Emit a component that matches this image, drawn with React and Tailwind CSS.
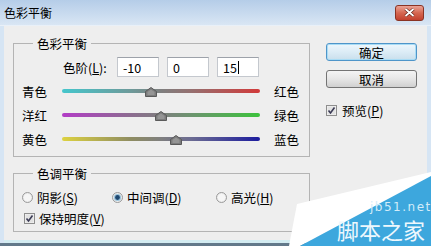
import React from "react";

const sliders = [
  {
    left: "青色",
    right: "红色",
    value: -10,
    track: "bg-[linear-gradient(to_right,#45c6cc,#6e9a9a_35%,#7f7f7f_50%,#957070_65%,#d23a3a)]",
  },
  {
    left: "洋红",
    right: "绿色",
    value: 0,
    track: "bg-[linear-gradient(to_right,#b23cc6,#8c6c90_35%,#7f7f7f_50%,#6c946e_65%,#3cc23c)]",
  },
  {
    left: "黄色",
    right: "蓝色",
    value: 15,
    track: "bg-[linear-gradient(to_right,#ddd240,#8e8c62_35%,#7f7f7f_50%,#6c6c92_65%,#1c1c9e)]",
  },
];

// slider thumb (little grey "house")
const Thumb = ({ value }) => (
  <svg
    className="absolute top-[-2px]"
    style={{ left: ((value + 100) / 200) * 198 - 6 }}
    width="12"
    height="10"
    viewBox="0 0 12 10"
  >
    <polygon points="6,0.5 11.5,4.5 11.5,9.5 0.5,9.5 0.5,4.5" fill="#7c7c7c" stroke="#5a5a5a" />
    <polygon points="6,2.5 9.5,5 9.5,8 2.5,8 2.5,5" fill="#959595" />
  </svg>
);

const Radio = ({ checked }) => (
  <svg width="11" height="11" viewBox="0 0 11 11">
    <circle cx="5.5" cy="5.5" r="5" fill="#ececec" stroke="#9a9a9a" />
    <circle cx="5.5" cy="5.5" r="3.6" fill={checked ? "#9cc4dc" : "#f6f6f6"} />
    {checked && <circle cx="5.5" cy="5.5" r="2.4" fill="#1f4870" />}
  </svg>
);

const Check = () => (
  <svg width="11" height="11" viewBox="0 0 11 11">
    <rect x="0.5" y="0.5" width="10" height="10" fill="#f4f4f4" stroke="#8e8e8e" />
    <rect x="1.5" y="1.5" width="8" height="8" fill="#e2e2e2" />
    <path d="M2.5 5.5 L4.5 8 L8.5 2.5" fill="none" stroke="#3c3c56" strokeWidth="1.6" />
  </svg>
);

const Field = ({ children, last }) => (
  <div className="relative w-[42px] h-[20px] bg-white border border-[#c4c8ce] border-t-[#9da2aa] flex items-center pl-[5px]">
    {children}
    {last && <span className="w-px h-[13px] bg-black ml-px" />}
  </div>
);

export default function App() {
  return (
    <div className="relative w-[431px] h-[246px] overflow-hidden bg-[#d6e5f4] text-black text-[12.5px] leading-[17px] font-['Noto_Sans_CJK_SC','Noto_Sans',sans-serif]">
      {/* title bar */}
      <div className="h-[25px] flex items-center justify-between pl-[4px] pr-[7px] bg-gradient-to-b from-[#b5cde8] to-[#d9e6f4]">
        <span className="text-[12px]">色彩平衡</span>
        <div className="w-[29px] h-[16px] rounded-[3px] border border-[#8a3324] bg-gradient-to-b from-[#eaa396] via-[#d56650] to-[#c2402e] flex items-center justify-center">
          <svg width="11" height="9" viewBox="0 0 11 9">
            <path d="M1.5 1 L9.5 8 M9.5 1 L1.5 8" stroke="#5a1a10" strokeWidth="3" />
            <path d="M1.5 1 L9.5 8 M9.5 1 L1.5 8" stroke="#ffffff" strokeWidth="1.8" />
          </svg>
        </div>
      </div>
      <div className="h-px bg-[#e9f0f8]" />

      {/* client area */}
      <div className="mx-[4px] h-[214px] bg-[#eeeeee] flex pl-[9px] pt-[9px]">
        <div className="flex flex-col w-[297px]">
          <fieldset className="h-[122px] border border-[#b4b4b4]">
            <legend className="ml-[19px] px-[4px]">色彩平衡</legend>
            <div className="mt-[5px] h-[20px] flex items-center pl-[49px] gap-[8px]">
              <span className="w-[46px]">
                色阶(<u>L</u>):
              </span>
              <Field>-10</Field>
              <Field>0</Field>
              <Field last>15</Field>
            </div>
            <div className="mt-[2px]">
              {sliders.map((s) => (
                <div key={s.left} className="h-[24px] flex items-center pl-[8px]">
                  <span className="w-[40px]">{s.left}</span>
                  <div className={`relative w-[198px] h-[4px] rounded-full ${s.track}`}>
                    <Thumb value={s.value} />
                  </div>
                  <span className="ml-[14px]">{s.right}</span>
                </div>
              ))}
            </div>
          </fieldset>

          <fieldset className="mt-[8px] h-[67px] border border-[#b4b4b4]">
            <legend className="ml-[19px] px-[4px]">色调平衡</legend>
            <div className="mt-[5px] h-[20px] flex items-center pl-[8px]">
              <div className="w-[90px] flex items-center gap-[4px]">
                <Radio />
                <span>
                  阴影(<u>S</u>)
                </span>
              </div>
              <div className="w-[104px] flex items-center gap-[4px]">
                <Radio checked />
                <span>
                  中间调(<u>D</u>)
                </span>
              </div>
              <div className="flex items-center gap-[4px]">
                <Radio />
                <span>
                  高光(<u>H</u>)
                </span>
              </div>
            </div>
            <div className="mt-px h-[20px] flex items-center pl-[10px] gap-[4px]">
              <Check />
              <span>
                保持明度(<u>V</u>)
              </span>
            </div>
          </fieldset>
        </div>

        {/* buttons */}
        <div className="ml-[16px] flex flex-col">
          <button className="mt-[8px] w-[91px] h-[18px] rounded-[3px] border border-[#4f95c9] bg-gradient-to-b from-[#eef7fc] via-[#dcecf6] to-[#c9dfec] shadow-[inset_0_0_0_1px_#a9dcf5] flex items-center justify-center">
            确定
          </button>
          <button className="mt-[9px] w-[91px] h-[18px] rounded-[3px] border border-[#747474] bg-gradient-to-b from-[#f4f4f4] via-[#e6e6e6] to-[#d0d0d0] flex items-center justify-center">
            取消
          </button>
          <div className="mt-[14px] h-[16px] flex items-center gap-[5px]">
            <Check />
            <span>
              预览(<u>P</u>)
            </span>
          </div>
        </div>
      </div>

      {/* bottom frame */}
      <div className="mx-[4px] h-[3px] bg-[#d3ecf1]" />
      <div className="h-[3px] bg-[#63798a]" />

      {/* watermark */}
      <svg
        className="absolute left-[285px] top-[165px]"
        width="146"
        height="81"
        viewBox="0 0 146 81"
      >
        <polygon points="12,39 146,7 146,12 15,81 4,81" fill="#ffffff" />
        <polygon points="146,11 146,81 15,81" fill="#3da7dd" />
      </svg>
      <div className="absolute left-[370px] top-[200px] text-[12px] leading-[14px] tracking-[1.5px] text-[#d3ecf9] font-['DejaVu_Sans',sans-serif] whitespace-nowrap">
        jb51.net
      </div>
      <div className="absolute left-[337px] top-[213px] text-[22px] leading-[32px] text-[#eef8fd] whitespace-nowrap">
        脚本之家
      </div>
    </div>
  );
}
